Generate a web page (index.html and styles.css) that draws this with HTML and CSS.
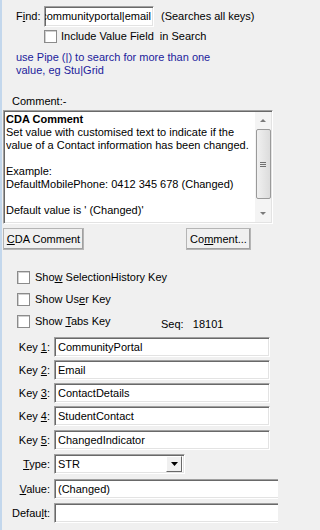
FILE: index.html
```html
<!DOCTYPE html>
<html>
<head>
<meta charset="utf-8">
<link rel="stylesheet" href="styles.css">
</head>
<body>
<div class="win">
  <div class="find-row">
    <span class="find-lbl">F<u>i</u>nd:</span>
    <div class="field find-field"><span>communityportal|email</span></div>
    <span class="hint">(Searches all keys)</span>
  </div>
  <div class="incl-row"><span class="cb"></span><span>Include Value Field&nbsp; in Search</span></div>
  <p class="pipe">use Pipe (|) to search for more than one<br>value, eg Stu|Grid</p>
  <div class="comment-lbl">Comment:-</div>
  <div class="memo">
    <div class="memo-text">
      <b>CDA Comment</b><br>
      Set value with customised text to indicate if the<br>
      value of a Contact information has been changed.<br>
      <br>
      Example:<br>
      DefaultMobilePhone: 0412 345 678 (Changed)<br>
      <br>
      Default value is ' (Changed)'
    </div>
    <div class="vscroll">
      <div class="arrow up"></div>
      <div class="thumb"><div class="grip"></div></div>
      <div class="arrow down"></div>
    </div>
  </div>
  <div class="btn-row">
    <div class="btn btn-cda"><u>C</u>DA Comment</div>
    <div class="btn btn-comment">Co<u>m</u>ment...</div>
  </div>
  <div class="opts">
    <div class="opt-row"><span class="cb"></span><span>Sho<u>w</u> SelectionHistory Key</span></div>
    <div class="opt-row"><span class="cb"></span><span>Show Us<u>e</u>r Key</span></div>
    <div class="opt-row"><span class="cb"></span><span class="tabs-lbl">Show <u>T</u>abs Key</span><span class="seq">Seq:&nbsp;&nbsp; 18101</span></div>
  </div>
  <div class="keys">
    <div class="key-row"><span class="klbl">Key <u>1</u>:</span><div class="field kfield">CommunityPortal</div></div>
    <div class="key-row"><span class="klbl">Key <u>2</u>:</span><div class="field kfield">Email</div></div>
    <div class="key-row"><span class="klbl">Key <u>3</u>:</span><div class="field kfield">ContactDetails</div></div>
    <div class="key-row"><span class="klbl">Key <u>4</u>:</span><div class="field kfield">StudentContact</div></div>
    <div class="key-row k5"><span class="klbl">Key <u>5</u>:</span><div class="field kfield">ChangedIndicator</div></div>
    <div class="key-row type-row"><span class="klbl"><u>T</u>ype:</span><div class="field select"><span class="sel-val">STR</span><span class="dd"><svg width="7" height="4" viewBox="0 0 7 4"><path d="M0 0H7L3.5 4Z" fill="#000"/></svg></span></div></div>
    <div class="key-row val-row"><span class="klbl"><u>V</u>alue:</span><div class="field wide">(Changed)</div></div>
    <div class="key-row def-row"><span class="klbl">Defau<u>l</u>t:</span><div class="field wide"></div></div>
  </div>
</div>
</body>
</html>
```
FILE: styles.css
```css
html, body {
  margin: 0;
  padding: 0;
  background: #f0f0f0;
  width: 278px;
  height: 530px;
  overflow: hidden;
}
body {
  font-family: "Liberation Sans", Arial, sans-serif;
  font-size: 11px;
  line-height: 13px;
  color: #000;
}
.win {
  border-left: 2px solid #c3d7ec;
  width: 278px;
  height: 530px;
  box-sizing: border-box;
  padding-top: 6px;
  overflow: hidden;
}
u { text-decoration: underline; text-underline-offset: 1px; }

.field {
  background: #fff;
  box-sizing: border-box;
  border-top: 1px solid #a0a0a0;
  border-left: 1px solid #a0a0a0;
  border-right: 1px solid #fff;
  border-bottom: 1px solid #fff;
  box-shadow: inset 1px 1px 0 #696969, inset -1px -1px 0 #e3e3e3;
  padding: 0 3px;
  display: flex;
  align-items: center;
  white-space: nowrap;
  overflow: hidden;
}

.find-row {
  display: flex;
  align-items: center;
  height: 21px;
  padding-left: 14px;
}
.find-lbl { width: 28px; flex: none; }
.find-field {
  width: 110px;
  height: 21px;
  justify-content: flex-end;
  padding: 0 2px 0 0;
  flex: none;
}
.hint { margin-left: 7px; white-space: nowrap; }

.cb {
  width: 13px;
  height: 13px;
  box-sizing: border-box;
  background: #fff;
  border: 1px solid #8b8b8b;
  box-shadow: inset 1px 1px 0 #d0d0d0;
  flex: none;
}
.incl-row {
  display: flex;
  align-items: center;
  gap: 4px;
  margin: 3px 0 0 42px;
  height: 13px;
}
.pipe {
  margin: 8px 0 0 14px;
  color: #1c1c9c;
}
.comment-lbl {
  margin: 18px 0 0 10px;
}
.memo {
  margin: 2px 0 0 1px;
  width: 270px;
  height: 114px;
  box-sizing: border-box;
  background: #fff;
  border-top: 1px solid #a0a0a0;
  border-left: 1px solid #a0a0a0;
  border-right: 1px solid #fff;
  border-bottom: 1px solid #fff;
  box-shadow: inset 1px 1px 0 #696969, inset -1px -1px 0 #e3e3e3;
  display: flex;
  padding: 1px 1px 1px 2px;
}
.memo-text {
  flex: 1;
  padding-top: 1px;
  white-space: nowrap;
  overflow: hidden;
}
.vscroll {
  width: 16px;
  background: #f4f4f4;
  display: flex;
  flex-direction: column;
  align-items: center;
}
.arrow {
  width: 0;
  height: 0;
  border-left: 3px solid transparent;
  border-right: 3px solid transparent;
  flex: none;
}
.arrow.up {
  border-bottom: 3px solid #7a7a7a;
  margin: 7px 0 7px;
}
.arrow.down {
  border-top: 3px solid #7a7a7a;
  margin: auto 0 7px;
}
.thumb {
  width: 15px;
  height: 70px;
  box-sizing: border-box;
  border: 1px solid #9a9a9a;
  border-radius: 2px;
  background: linear-gradient(to right, #f0f0f0, #dcdcdc);
  display: flex;
  align-items: center;
  justify-content: center;
}
.grip {
  width: 6px;
  height: 5px;
  border-top: 1px solid #707070;
  border-bottom: 1px solid #707070;
  box-sizing: border-box;
  background: linear-gradient(#707070, #707070) center / 100% 1px no-repeat;
}

.btn-row {
  display: flex;
  justify-content: space-between;
  margin: 4px 0 0 1px;
  width: 248px;
}
.btn {
  height: 22px;
  box-sizing: border-box;
  background: #f0f0f0;
  border-top: 1px solid #fff;
  border-left: 1px solid #fff;
  border-right: 1px solid #696969;
  border-bottom: 1px solid #696969;
  box-shadow: inset -1px -1px 0 #a0a0a0;
  outline: 1px solid #b5b5b5;
  outline-offset: -1px;
  display: flex;
  align-items: center;
  justify-content: center;
}
.btn-cda { width: 81px; }
.btn-comment { width: 65px; }

.opts {
  margin: 21px 0 0 15px;
  display: flex;
  flex-direction: column;
  gap: 9px;
}
.opt-row {
  display: flex;
  align-items: center;
  gap: 5px;
  height: 13px;
}
.tabs-lbl { width: 121px; }
.seq {
  align-self: flex-start;
  margin-top: 3px;
}

.keys {
  margin-top: 9px;
  display: flex;
  flex-direction: column;
  gap: 3px;
}
.key-row {
  display: flex;
  align-items: center;
  gap: 4px;
}
.klbl {
  width: 48px;
  text-align: right;
  flex: none;
}
.kfield {
  width: 216px;
  height: 20px;
}
.k5 { margin-top: 1px; }
.type-row { margin-top: 1px; }
.select {
  width: 131px;
  height: 20px;
  padding-right: 2px;
  justify-content: space-between;
}
.dd {
  width: 16px;
  height: 16px;
  box-sizing: border-box;
  background: #f0f0f0;
  border-top: 1px solid #fff;
  border-left: 1px solid #fff;
  border-right: 1px solid #696969;
  border-bottom: 1px solid #696969;
  display: flex;
  align-items: center;
  justify-content: center;
}
.val-row { margin-top: 2px; }
.def-row { margin-top: 1px; }
.wide {
  width: 240px;
  height: 20px;
  flex: none;
}
```
